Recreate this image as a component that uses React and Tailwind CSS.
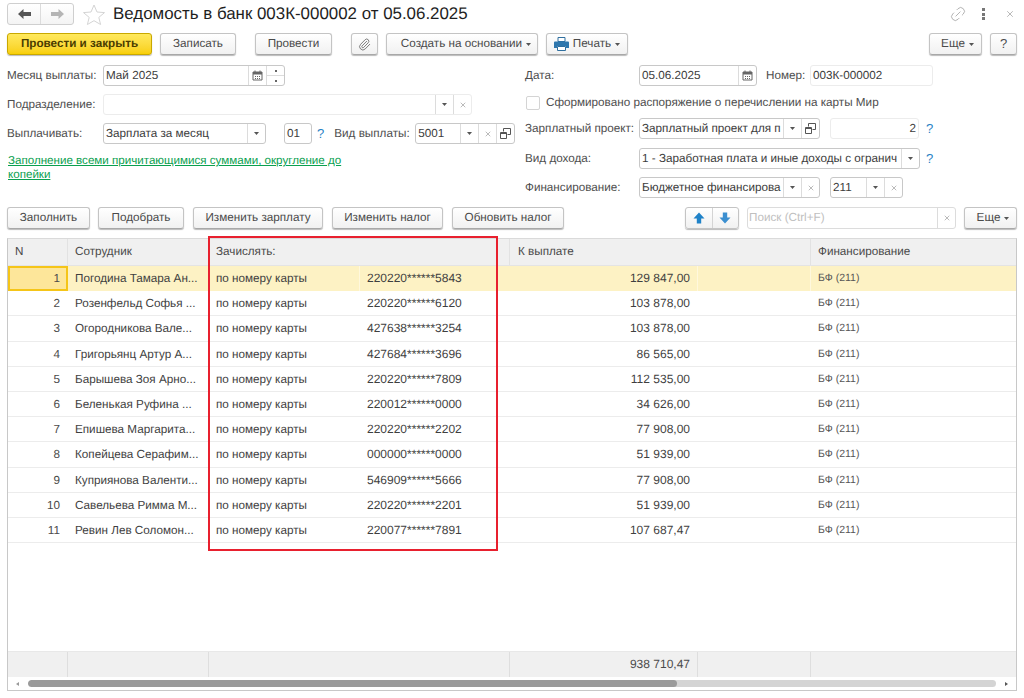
import { Paperclip, Link2, X } from "lucide-react";

const font = "font-['Liberation_Sans',Arial,sans-serif]";

const rows = [
    ["1", "Погодина Тамара Ан...", "220220******5843", "129 847,00"],
    ["2", "Розенфельд Софья ...", "220220******6120", "103 878,00"],
    ["3", "Огородникова Вале...", "427638******3254", "103 878,00"],
    ["4", "Григорьянц Артур А...", "427684******3696", "86 565,00"],
    ["5", "Барышева Зоя Арно...", "220220******7809", "112 535,00"],
    ["6", "Беленькая Руфина ...", "220012******0000", "34 626,00"],
    ["7", "Епишева Маргарита...", "220220******2202", "77 908,00"],
    ["8", "Копейцева Серафим...", "000000******0000", "51 939,00"],
    ["9", "Куприянова Валенти...", "546909******5666", "77 908,00"],
    ["10", "Савельева Римма М...", "220220******2201", "51 939,00"],
    ["11", "Ревин Лев Соломон...", "220077******7891", "107 687,47"],
];

const Caret = () => (
    <svg width="5" height="3" viewBox="0 0 5 3" className="shrink-0">
        <path d="M0 0h5L2.5 3z" fill="#555" />
    </svg>
);

const Btn = ({ w, children, className = "" }) => (
    <div className={`h-[22px] flex items-center justify-center gap-[4px] rounded-[3px] border border-[#c4c4c4] border-b-[#a8a8a8] bg-gradient-to-b from-white to-[#f1f1f1] shadow-[0_1px_1px_#bbb] text-[11.7px] text-[#4a4a4a] shrink-0 ${w} ${className}`}>
        {children}
    </div>
);

const Calendar = () => (
    <svg width="11" height="11" viewBox="0 0 11 11">
        <path d="M1 2h9v8H1z" fill="#fff" stroke="#666" />
        <path d="M1 2h9v2.5H1z" fill="#666" />
        <path d="M3 6h1v1H3zM5 6h1v1H5zM7 6h1v1H7zM3 8h1v1H3zM5 8h1v1H5zM7 8h1v1H7z" fill="#666" />
        <path d="M3 .5v2M8 .5v2" stroke="#666" />
    </svg>
);

const Open = () => (
    <svg width="11" height="11" viewBox="0 0 11 11" fill="none" stroke="#555">
        <path d="M3.5 3.5v-3h7v6h-3" />
        <path d="M.5 4.5h6v6h-6z" />
        <path d="M.5 5.5h6" />
    </svg>
);

const Cross = () => <X size={8} strokeWidth={1.5} color="#777" />;

const Addon = ({ w = "w-[18px]", children }) => (
    <div className={`h-full ${w} shrink-0 flex items-center justify-center border-l border-[#dcdcdc]`}>{children}</div>
);

const Field = ({ w, text, light, right, children, className = "" }) => (
    <div className={`h-[21px] flex rounded-[3px] border shrink-0 bg-white text-[11.7px] text-[#3c3c3c] ${light ? "border-[#ececec]" : "border-[#c8c8c8]"} ${w} ${className}`}>
        <div className={`flex-1 min-w-0 overflow-hidden whitespace-nowrap leading-[20px] px-[2px] ${right ? "text-right" : ""}`}>{text}</div>
        {children}
    </div>
);

const Label = ({ w, children, className = "" }) => (
    <div className={`text-[11.7px] text-[#4e4e4e] whitespace-nowrap shrink-0 ${w} ${className}`}>{children}</div>
);

const Hint = ({ className = "" }) => <span className={`text-[13px] text-[#1f7fc4] ${className}`}>?</span>;

const Arrow = ({ up, color, size = 14 }) => (
    <svg width={size} height={size} viewBox="0 0 14 14" style={{ transform: up ? "none" : "rotate(180deg)" }}>
        <path d="M7 1.5 12.5 7.5H9.2V12.5H4.8V7.5H1.5z" fill={color} />
    </svg>
);

const Star = () => (
    <svg width="22" height="21" viewBox="0 0 22 21" fill="#fff" stroke="#d4d4d4">
        <path d="M11 1l3 7 7.5.6-5.7 4.8 1.8 7.1L11 16.7l-6.6 3.8 1.8-7.1L.5 8.6 8 8z" />
    </svg>
);

const Printer = () => (
    <svg width="15" height="14" viewBox="0 0 15 14">
        <path d="M4 .5h7v4H4z" fill="#fff" stroke="#2f6f9f" />
        <path d="M1 4.5h13a1 1 0 0 1 1 1V11h-3V9H3v2H0V5.5a1 1 0 0 1 1-1z" fill="#2f77ad" />
        <path d="M3.5 9.5h8v4h-8z" fill="#fff" stroke="#2f6f9f" />
    </svg>
);

const cols = "grid grid-cols-[60px_141px_150px_151px_187px_114px_1fr]";

const App = () => {
    return (
        <div className={`${font} [text-rendering:geometricPrecision] relative w-[1024px] h-[698px] overflow-hidden bg-white px-[7px] pt-[3px]`}>
            {/* title */}
            <div className="h-[22px] flex items-center">
                <div className="w-[67px] h-[22px] flex rounded-[3px] border border-[#cfcfcf] bg-gradient-to-b from-white to-[#f4f4f4] shrink-0">
                    <div className="w-[33px] flex items-center justify-center border-r border-[#dcdcdc]">
                        <svg width="13" height="10" viewBox="0 0 13 10"><path d="M5.5 0v3H13v4H5.5v3L0 5z" fill="#555" /></svg>
                    </div>
                    <div className="flex-1 flex items-center justify-center">
                        <svg width="13" height="10" viewBox="0 0 13 10"><path d="M7.5 0v3H0v4h7.5v3L13 5z" fill="#b5b5b5" /></svg>
                    </div>
                </div>
                <div className="ml-[9px] w-[22px] shrink-0 flex"><Star /></div>
                <div className="ml-[8px] text-[16.9px] text-[#1f1f1f] whitespace-nowrap">Ведомость в банк 003К-000002 от 05.06.2025</div>
                <div className="ml-auto flex items-center mr-[2px]">
                    <Link2 size={18} strokeWidth={1} color="#a0a0a0" className="-rotate-45" />
                    <div className="ml-[15px] flex flex-col gap-[1.5px]">
                        <span className="w-[3px] h-[3px] bg-[#777]" />
                        <span className="w-[3px] h-[3px] bg-[#777]" />
                        <span className="w-[3px] h-[3px] bg-[#777]" />
                    </div>
                    <X size={10} strokeWidth={1.25} color="#777" className="ml-[20px]" />
                </div>
            </div>

            {/* command bar */}
            <div className="mt-[8px] flex">
                <div className="w-[145px] h-[22px] flex items-center justify-center rounded-[3px] border border-[#c9a800] bg-gradient-to-b from-[#ffe95c] to-[#f8cf00] shadow-[0_1px_1px_#bbb] text-[11.7px] font-bold text-[#4a3c00]">Провести и закрыть</div>
                <Btn w="w-[76px]" className="ml-[8px]">Записать</Btn>
                <Btn w="w-[77px]" className="ml-[19px]">Провести</Btn>
                <Btn w="w-[27px]" className="ml-[19px]"><Paperclip size={13} strokeWidth={1.75} color="#777" /></Btn>
                <Btn w="w-[152px]" className="ml-[8px] pl-[8px]">Создать на основании <Caret /></Btn>
                <Btn w="w-[82px]" className="ml-[8px]"><Printer /> Печать <Caret /></Btn>
                <Btn w="w-[53px]" className="ml-auto pl-[4px]">Еще <Caret /></Btn>
                <Btn w="w-[27px]" className="ml-[8px]"><span className="text-[13px]">?</span></Btn>
            </div>

            {/* form */}
            <div className="mt-[10px] h-[133px] flex">
                <div className="w-[518px] shrink-0">
                    <div className="h-[21px] flex items-center">
                        <Label w="w-[96px]">Месяц выплаты:</Label>
                        <Field w="w-[182px]" text="Май 2025">
                            <Addon><Calendar /></Addon>
                            <div className="h-full w-[18px] border-l border-[#dcdcdc] flex flex-col">
                                <div className="flex-1 border-b border-[#dcdcdc] flex items-center justify-center"><span className="w-[2px] h-[2px] bg-[#666]" /></div>
                                <div className="flex-1 flex items-center justify-center"><span className="w-[2px] h-[2px] bg-[#666]" /></div>
                            </div>
                        </Field>
                    </div>
                    <div className="mt-[8px] h-[21px] flex items-center">
                        <Label w="w-[96px]">Подразделение:</Label>
                        <Field w="w-[369px]" light>
                            <Addon><Caret /></Addon>
                            <Addon><Cross /></Addon>
                        </Field>
                    </div>
                    <div className="mt-[8px] h-[21px] flex items-center">
                        <Label w="w-[96px]">Выплачивать:</Label>
                        <Field w="w-[163px]" text="Зарплата за месяц"><Addon><Caret /></Addon></Field>
                        <Field w="w-[28px]" text="01" className="ml-[18px]" />
                        <Hint className="ml-[5px]" />
                        <Label w="w-[81px]" className="ml-[10px]">Вид выплаты:</Label>
                        <Field w="w-[100px]" text="5001">
                            <Addon><Caret /></Addon>
                            <Addon><Cross /></Addon>
                            <Addon><Open /></Addon>
                        </Field>
                    </div>
                    <div className="mt-[10px] w-[345px] text-[11.6px] leading-[14px] text-[#0aa04f] underline underline-offset-[1px] pl-[1px]">
                        Заполнение всеми причитающимися суммами, округление до копейки
                    </div>
                </div>
                <div className="flex-1">
                    <div className="h-[21px] flex items-center">
                        <Label w="w-[114px]">Дата:</Label>
                        <Field w="w-[118px]" text="05.06.2025"><Addon><Calendar /></Addon></Field>
                        <Label w="w-[44px]" className="ml-[9px]">Номер:</Label>
                        <Field w="w-[123px]" text="003К-000002" light />
                    </div>
                    <div className="mt-[6px] h-[21px] flex items-center">
                        <div className="w-[14px] h-[14px] rounded-[2px] border border-[#d4d4d4] ml-[1px] shrink-0" />
                        <Label className="ml-[6px]">Сформировано распоряжение о перечислении на карты Мир</Label>
                    </div>
                    <div className="mt-[5px] h-[21px] flex items-center">
                        <Label w="w-[114px]">Зарплатный проект:</Label>
                        <Field w="w-[181px]" text="Зарплатный проект для п">
                            <Addon><Caret /></Addon>
                            <Addon><Open /></Addon>
                        </Field>
                        <Field w="w-[89px]" text="2" right light className="ml-[10px]" />
                        <Hint className="ml-[7px]" />
                    </div>
                    <div className="mt-[9px] h-[21px] flex items-center">
                        <Label w="w-[114px]">Вид дохода:</Label>
                        <Field w="w-[281px]" text="1 - Заработная плата и иные доходы с огранич"><Addon><Caret /></Addon></Field>
                        <Hint className="ml-[6px]" />
                    </div>
                    <div className="mt-[8px] h-[21px] flex items-center">
                        <Label w="w-[114px]">Финансирование:</Label>
                        <Field w="w-[181px]" text="Бюджетное финансирова">
                            <Addon><Caret /></Addon>
                            <Addon><Cross /></Addon>
                        </Field>
                        <Field w="w-[73px]" text="211" className="ml-[10px]">
                            <Addon><Caret /></Addon>
                            <Addon><Cross /></Addon>
                        </Field>
                    </div>
                </div>
            </div>

            {/* table bar */}
            <div className="mt-[9px] flex">
                <Btn w="w-[83px]">Заполнить</Btn>
                <Btn w="w-[86px]" className="ml-[8px]">Подобрать</Btn>
                <Btn w="w-[130px]" className="ml-[9px]">Изменить зарплату</Btn>
                <Btn w="w-[111px]" className="ml-[9px]">Изменить налог</Btn>
                <Btn w="w-[112px]" className="ml-[9px]">Обновить налог</Btn>
                <div className="ml-[121px] w-[54px] h-[22px] flex rounded-[3px] border border-[#c4c4c4] bg-gradient-to-b from-white to-[#f1f1f1] shadow-[0_1px_1px_#bbb] shrink-0">
                    <div className="flex-1 flex items-center justify-center border-r border-[#d4d4d4]"><Arrow up color="#1f82c8" /></div>
                    <div className="flex-1 flex items-center justify-center"><Arrow color="#3b8fd0" /></div>
                </div>
                <div className="ml-[8px] w-[209px] h-[22px] flex rounded-[3px] border border-[#dcdcdc] bg-white shrink-0">
                    <div className="flex-1 pl-[1px] text-[11.7px] leading-[20px] text-[#c0c0c0]">Поиск (Ctrl+F)</div>
                    <Addon><Cross /></Addon>
                </div>
                <Btn w="w-[53px]" className="ml-[8px] pl-[5px]">Еще <Caret /></Btn>
            </div>

            {/* table */}
            <div className="mt-[9px] w-[1010px] h-[453px] border border-[#c8c8c8] border-t-[#dadada] flex flex-col text-[11.7px] text-[#4a4a4a]">
                <div className={`${cols} h-[27px] bg-[#f0f0f0] border-b border-[#e4e4e4] shrink-0 leading-[26px]`}>
                    <div className="pl-[7px] border-r border-[#e2e2e2]">N</div>
                    <div className="pl-[7px] border-r border-[#e2e2e2]">Сотрудник</div>
                    <div className="col-span-2 pl-[7px] border-r border-[#e2e2e2]">Зачислять:</div>
                    <div className="col-span-2 pl-[8px] border-r border-[#e2e2e2]">К выплате</div>
                    <div className="pl-[7px]">Финансирование</div>
                </div>
                <div className="flex-1">
                    {rows.map((r, i) => (
                        <div key={r[0]} className={`${cols} h-[25.2px] leading-[25px] border-b ${i === 0 ? "bg-[#fdf2c4] border-[#fdf2c4]" : "border-[#ececec]"}`}>
                            <div className={`text-right ${i === 0 ? "bg-[#fde69a] border-2 border-[#f5c518] leading-[21px] pr-[6px]" : "pr-[8px]"}`}>{r[0]}</div>
                            <div className="pl-[7px] whitespace-nowrap overflow-hidden text-[#3f3f3f]">{r[1]}</div>
                            <div className="pl-[7px] text-[#3f3f3f]">по номеру карты</div>
                            <div className={`pl-[7px] text-[12px] text-[#3f3f3f] border-l ${i === 0 ? "border-[#fff8dd]" : "border-transparent"}`}>{r[2]}</div>
                            <div className="text-right pr-[7px] text-[12px] text-[#3f3f3f]">{r[3]}</div>
                            <div className={`border-r ${i === 0 ? "border-l border-[#fff8dd]" : "border-transparent"}`} />
                            <div className="pl-[7px] text-[10.5px] leading-[24px] text-[#555]">БФ (211)</div>
                        </div>
                    ))}
                </div>
                <div className={`${cols} h-[26px] bg-[#f0f0f0] border-t border-[#e8e8e8] shrink-0 leading-[25px]`}>
                    <div className="border-r border-[#dedede]" />
                    <div className="border-r border-[#dedede]" />
                    <div className="col-span-2 border-r border-[#dedede]" />
                    <div className="text-right pr-[7px] text-[12px]">938 710,47</div>
                    <div className="border-x border-[#dedede]" />
                    <div />
                </div>
                <div className="h-[13px] shrink-0 flex items-center bg-white">
                    <span className="ml-[8px] w-0 h-0 border-y-[2px] border-y-transparent border-r-[3px] border-r-[#999]" />
                    <div className="ml-[9px] w-[968px] h-[7px] rounded-full bg-[#d4d4d4] overflow-hidden">
                        <div className="w-[649px] h-full rounded-full bg-[#9a9a9a]" />
                    </div>
                    <span className="ml-[9px] w-0 h-0 border-y-[2px] border-y-transparent border-l-[3px] border-l-[#555]" />
                </div>
            </div>

            {/* highlight drawn over the table */}
            <div className="absolute left-[208px] top-[236px] w-[290px] h-[315px] border-2 border-[#e8202e] pointer-events-none" />
        </div>
    );
};

export default App;
